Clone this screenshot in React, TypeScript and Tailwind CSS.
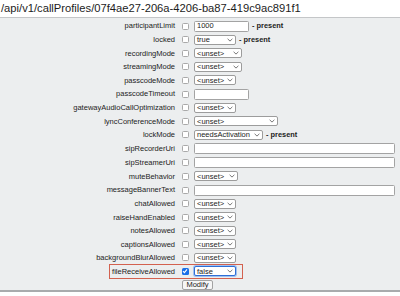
import React from 'react';

type Field = {
  name: string;
  kind: 'text' | 'select';
  value?: string;
  width: string;
  present?: boolean;
  checked?: boolean;
  focus?: boolean;
};

const fields: Field[] = [
  { name: 'participantLimit', kind: 'text', value: '1000', width: 'w-[55px]', present: true },
  { name: 'locked', kind: 'select', value: 'true', width: 'w-[42px]', present: true },
  { name: 'recordingMode', kind: 'select', value: '<unset>', width: 'w-[48px]' },
  { name: 'streamingMode', kind: 'select', value: '<unset>', width: 'w-[48px]' },
  { name: 'passcodeMode', kind: 'select', value: '<unset>', width: 'w-[42px]' },
  { name: 'passcodeTimeout', kind: 'text', value: '', width: 'w-[55px]' },
  { name: 'gatewayAudioCallOptimization', kind: 'select', value: '<unset>', width: 'w-[42px]' },
  { name: 'lyncConferenceMode', kind: 'select', value: '<unset>', width: 'w-[84px]' },
  { name: 'lockMode', kind: 'select', value: 'needsActivation', width: 'w-[69px]', present: true },
  { name: 'sipRecorderUri', kind: 'text', value: '', width: 'w-[201px]' },
  { name: 'sipStreamerUri', kind: 'text', value: '', width: 'w-[201px]' },
  { name: 'muteBehavior', kind: 'select', value: '<unset>', width: 'w-[44px]' },
  { name: 'messageBannerText', kind: 'text', value: '', width: 'w-[201px]' },
  { name: 'chatAllowed', kind: 'select', value: '<unset>', width: 'w-[42px]' },
  { name: 'raiseHandEnabled', kind: 'select', value: '<unset>', width: 'w-[42px]' },
  { name: 'notesAllowed', kind: 'select', value: '<unset>', width: 'w-[42px]' },
  { name: 'captionsAllowed', kind: 'select', value: '<unset>', width: 'w-[42px]' },
  { name: 'backgroundBlurAllowed', kind: 'select', value: '<unset>', width: 'w-[42px]' },
  { name: 'fileReceiveAllowed', kind: 'select', value: 'false', width: 'w-[42px]', checked: true, focus: true },
];

const Chevron: React.FC = () => (
  <svg width="6" height="4" viewBox="0 0 6 4" className="shrink-0">
    <path d="M0.6 0.8 L3 3.1 L5.4 0.8" fill="none" stroke="#555" strokeWidth="0.8" />
  </svg>
);

const Checkbox: React.FC<{ checked?: boolean }> = ({ checked }) =>
  checked ? (
    <div className="w-[7px] h-[7px] rounded-[1.5px] bg-[#1a6fe8] flex items-center justify-center">
      <svg width="6" height="6" viewBox="0 0 6 6">
        <path d="M1 3.2 L2.4 4.6 L5 1.3" fill="none" stroke="#fff" strokeWidth="1.1" />
      </svg>
    </div>
  ) : (
    <div className="w-[7px] h-[7px] rounded-[1.5px] border border-[#a9a9a9] bg-white" />
  );

const App: React.FC = () => {
  return (
    <div className="w-[400px] h-[296px] overflow-hidden bg-white font-['Liberation_Sans',Arial,sans-serif] text-[#1c1c1c]">
      {/* URL header */}
      <div className="h-[18px] flex items-center pl-px text-[11.2px] leading-none whitespace-nowrap border-b border-[#c4c6c8]">
        /api/v1/callProfiles/07f4ae27-206a-4206-ba87-419c9ac891f1
      </div>

      {/* Form panel */}
      <div className="h-[274px] bg-[#eceeef] pt-px border-b-2 border-[#a9abad] flex flex-col">
        {fields.map((f) => (
          <div
            key={f.name}
            className={`relative flex items-center ${f.kind === 'text' ? 'h-[14px]' : 'h-[13.5px]'}`}
          >
            <div className="w-[175px] text-right text-[7.5px] leading-none whitespace-nowrap">{f.name}</div>
            <div className="w-[19px] flex justify-center pl-px">
              <Checkbox checked={f.checked} />
            </div>
            {f.kind === 'text' ? (
              <div
                className={`${f.width} h-[11px] bg-white border border-[#a3a3a3] rounded-[1.5px] flex items-center px-[2px] text-[7.5px] leading-none`}
              >
                {f.value}
              </div>
            ) : (
              <div
                className={`${f.width} h-[10px] bg-white rounded-[2px] flex items-center justify-between pl-[2px] pr-[2px] text-[7.5px] leading-none whitespace-nowrap ${
                  f.focus ? 'border border-[#2f6fd6] ring-1 ring-[#9fc0f0]' : 'border border-[#9c9c9c]'
                }`}
              >
                <span>{f.value}</span>
                <Chevron />
              </div>
            )}
            {f.present && <span className="ml-[3px] text-[7.4px] font-bold leading-none">- present</span>}
            {f.focus && (
              <div className="absolute left-[109px] top-[-1px] w-[134px] h-[15.5px] border-[1.5px] border-[#d3614f]" />
            )}
          </div>
        ))}
        <div className="flex mt-[2px] pl-[182px]">
          <div className="w-[31px] h-[10px] bg-[#f6f6f6] border border-[#a3a3a3] rounded-[2px] flex items-center justify-center text-[7.5px] leading-none">
            Modify
          </div>
        </div>
      </div>
    </div>
  );
};

export default App;
